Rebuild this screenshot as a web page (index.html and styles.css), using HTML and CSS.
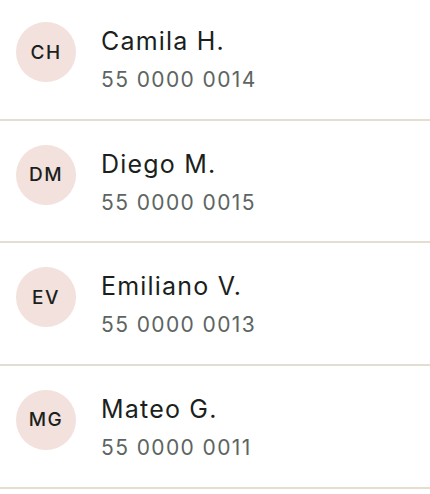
FILE: index.html
```html
<!DOCTYPE html>
<html lang="es">
<head>
  <meta charset="UTF-8">
  <meta name="viewport" content="width=device-width, initial-scale=1.0">
  <title>Contactos</title>
  <link rel="stylesheet" href="styles.css">
</head>
<body>
  <ul class="contacts">
    <li class="contact">
      <div class="avatar">CH</div>
      <div class="info">
        <div class="name">Camila H.</div>
        <div class="phone">55 0000 0014</div>
      </div>
    </li>
    <li class="contact">
      <div class="avatar">DM</div>
      <div class="info">
        <div class="name">Diego M.</div>
        <div class="phone">55 0000 0015</div>
      </div>
    </li>
    <li class="contact">
      <div class="avatar">EV</div>
      <div class="info">
        <div class="name">Emiliano V.</div>
        <div class="phone">55 0000 0013</div>
      </div>
    </li>
    <li class="contact">
      <div class="avatar">MG</div>
      <div class="info">
        <div class="name">Mateo G.</div>
        <div class="phone">55 0000 0011</div>
      </div>
    </li>
  </ul>
</body>
</html>
```

FILE: styles.css
```css
body {
  font-family: Inter, "Noto Sans", sans-serif;
  margin: 0;
  padding: 0;
  background-color: white;
  color: #1b1f1d;
}

/* la lista viene ya desplazada un poco hacia arriba */
.contacts {
  list-style: none;
  margin: -2px 0 0 0;
  padding: 0;
}

.contact {
  display: flex;
  align-items: flex-start;
  gap: 25px;
  padding: 24px 16px 24.67px 16px;
  border-bottom: 2px solid #e3ddd2;
}

.avatar {
  width: 60px;
  height: 60px;
  flex-shrink: 0;
  border-radius: 50%;
  background-color: #f2e1dc;
  display: flex;
  justify-content: center;
  align-items: center;
  font-size: 19px;
  font-weight: 500;
  letter-spacing: 1.5px;
}

.info {
  display: flex;
  flex-direction: column;
  gap: 9px;
  margin-top: 3px;
}

.name {
  font-size: 25px;
  line-height: 32px;
  letter-spacing: 1.2px;
}

.phone {
  font-size: 21px;
  line-height: 28px;
  color: #5d6562;
  letter-spacing: 1.4px;
}
```
